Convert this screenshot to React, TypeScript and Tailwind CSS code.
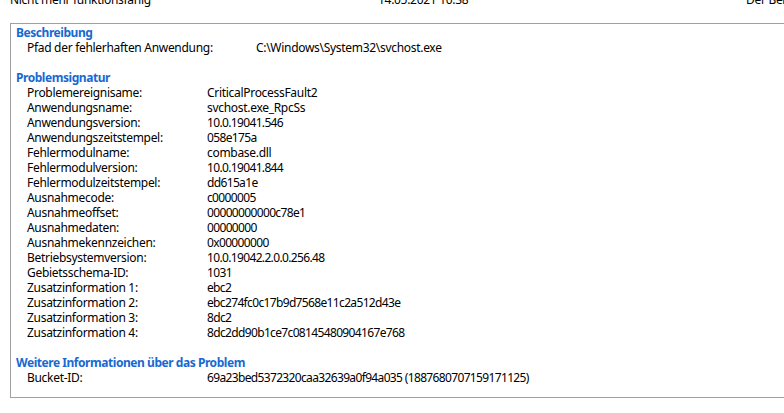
const signatur: [string, string][] = [
  ["Problemereignisame:", "CriticalProcessFault2"],
  ["Anwendungsname:", "svchost.exe_RpcSs"],
  ["Anwendungsversion:", "10.0.19041.546"],
  ["Anwendungszeitstempel:", "058e175a"],
  ["Fehlermodulname:", "combase.dll"],
  ["Fehlermodulversion:", "10.0.19041.844"],
  ["Fehlermodulzeitstempel:", "dd615a1e"],
  ["Ausnahmecode:", "c0000005"],
  ["Ausnahmeoffset:", "00000000000c78e1"],
  ["Ausnahmedaten:", "00000000"],
  ["Ausnahmekennzeichen:", "0x00000000"],
  ["Betriebsystemversion:", "10.0.19042.2.0.0.256.48"],
  ["Gebietsschema-ID:", "1031"],
  ["Zusatzinformation 1:", "ebc2"],
  ["Zusatzinformation 2:", "ebc274fc0c17b9d7568e11c2a512d43e"],
  ["Zusatzinformation 3:", "8dc2"],
  ["Zusatzinformation 4:", "8dc2dd90b1ce7c08145480904167e768"],
];

// digit-heavy values render a bit wide, tighten them
const isHex = (v: string) => /^[0-9a-fx.() ]+$/.test(v);

function Heading({ children }: { children: string }) {
  return <div className="h-[15px] pl-[5px] font-bold tracking-[-0.45px] text-[#1769d1]">{children}</div>;
}

function Row({ label, value, valueX }: { label: string; value: string; valueX: string }) {
  return (
    <div className="flex h-[15px] pl-[16px] whitespace-nowrap">
      <div className={valueX}>{label}</div>
      <div className={isHex(value) ? "tracking-[-0.65px]" : ""}>{value}</div>
    </div>
  );
}

export default function App() {
  return (
    <div
      className="flex h-[413px] w-[784px] overflow-hidden bg-white text-[12px] leading-[15px] tracking-[-0.3px] text-black"
      style={{ fontFamily: '"Noto Sans", "Liberation Sans", sans-serif' }}
    >
      {/* left edge of the list behind */}
      <div className="flex w-[2px] flex-col">
        <div className="h-[23px] bg-[#2d7fd1]" />
        <div className="h-[358px] bg-[#c8c8c8]" />
        <div className="flex-1 bg-[#f3dde4]" />
      </div>

      <div className="flex-1 pl-[10px]">
        {/* cut-off header row */}
        <div className="h-[23px] overflow-hidden whitespace-nowrap">
          <div className="flex -mt-[8px]">
            <span className="w-[368px]">Nicht mehr funktionsfähig</span>
            <span className="w-[368px]">14.05.2021 10:38</span>
            <span>Der Ber</span>
          </div>
        </div>

        <div className="h-[375px] w-[800px] border border-[#a0a0a0] pt-[1px]">
          <Heading>Beschreibung</Heading>
          <Row label="Pfad der fehlerhaften Anwendung:" value="C:\Windows\System32\svchost.exe" valueX="w-[229px]" />
          <div className="h-[15px]" />
          <Heading>Problemsignatur</Heading>
          {signatur.map(([l, v]) => (
            <Row key={l} label={l} value={v} valueX="w-[180px]" />
          ))}
          <div className="h-[15px]" />
          <Heading>Weitere Informationen über das Problem</Heading>
          <Row label="Bucket-ID:" value="69a23bed5372320caa32639a0f94a035 (1887680707159171125)" valueX="w-[180px]" />
        </div>
      </div>
    </div>
  );
}
